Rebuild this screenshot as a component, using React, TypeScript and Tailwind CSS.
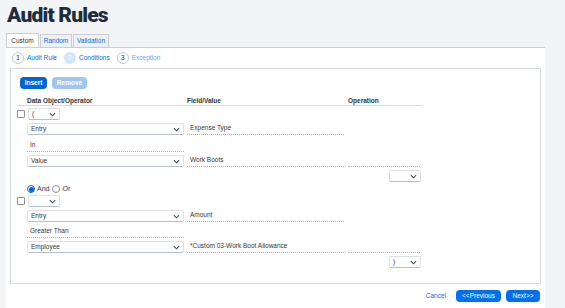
import React from 'react';

const Chevron: React.FC = () => (
  <svg width="7" height="5" viewBox="0 0 8 5" className="shrink-0">
    <path d="M1 1l3 3 3-3" fill="none" stroke="#354a5f" strokeWidth="1.2" />
  </svg>
);

const Select: React.FC<{ value?: string; w: string }> = ({ value = '', w }) => (
  <div className={`${w} h-[12px] flex items-center justify-between bg-white border border-[#dcdfe3] border-b-[#b8bec5] rounded-[2px] pl-[3px] pr-[3px]`}>
    <span className="text-[6.5px] text-[#32363a] leading-none">{value}</span>
    <Chevron />
  </div>
);

const Field: React.FC<{ text?: string; w: string }> = ({ text = '', w }) => (
  <div className={`${w} h-[12px] flex items-center border-b border-dotted border-[#a9b0b7] pl-[3px]`}>
    <span className="text-[6.5px] text-[#32363a] leading-none">{text}</span>
  </div>
);

const Step: React.FC<{ n: string; label: string; active?: boolean; color: string }> = ({ n, label, active, color }) => (
  <div className="flex items-center gap-[3px]">
    <div className={`w-[12px] h-[12px] rounded-full flex items-center justify-center text-[7px] ${active ? 'bg-[#d1e6fb] text-white' : 'border border-[#c3c8cd] text-[#32363a]'}`}>{n}</div>
    <span className={`text-[6.5px] ${color}`}>{label}</span>
  </div>
);

const App: React.FC = (): JSX.Element => {
  return (
    <div className="w-[565px] h-[308px] bg-[#f3f4f6] overflow-hidden flex flex-col" style={{ fontFamily: '"Liberation Sans", Arial, sans-serif' }}>
      <h1 className="pl-[7px] pt-[1px] h-[33px] text-[21px] font-black text-[#1d2d3e] tracking-[-0.8px] leading-[28px]" style={{ fontFamily: 'Roboto, "Liberation Sans", sans-serif' }}>Audit Rules</h1>

      <div className="ml-[6px] flex items-end gap-[1px] h-[14px]">
        <div className="h-[14px] w-[33px] bg-white border border-b-0 border-[#c9ced3] flex items-center justify-center text-[6.5px] text-[#32363a]">Custom</div>
        <div className="h-[13px] w-[32px] bg-[#eef0f3] border border-b-0 border-[#c9ced3] flex items-center justify-center text-[6.5px] text-[#0a6ed1]">Random</div>
        <div className="h-[13px] w-[36px] bg-[#eef0f3] border border-b-0 border-[#c9ced3] flex items-center justify-center text-[6.5px] text-[#0a6ed1]">Validation</div>
      </div>

      <div className="ml-[6px] w-[539px] flex-1 bg-white border-t border-[#c9ced3] flex flex-col">
        <div className="h-[20px] pl-[6px] flex items-center gap-[7px]">
          <Step n="1" label="Audit Rule" color="text-[#0a6ed1]" />
          <Step n="2" label="Conditions" active color="text-[#0a6ed1]" />
          <Step n="3" label="Exception" color="text-[#6ea6e6]" />
        </div>

        <div className="mx-[4px] h-[216px] border border-[#d5dadd] flex flex-col">
          <div className="pl-[9px] pt-[8px] flex gap-[5px]">
            <button className="h-[12px] w-[27px] rounded-[4px] bg-[#0064d9] text-white text-[6.5px] font-bold">Insert</button>
            <button className="h-[12px] w-[35px] rounded-[4px] bg-[#9ec6f3] text-white text-[6.5px] font-bold">Remove</button>
          </div>

          <div className="ml-[6px] mt-[7px] w-[406px] h-[10px] flex items-center border-b border-[#d5dadd] text-[6.5px] font-bold text-[#32363a]">
            <span className="ml-[10px] w-[160px]">Data Object/Operator</span>
            <span className="w-[161px]">Field/Value</span>
            <span>Operation</span>
          </div>

          <div className="ml-[6px] flex flex-col">
            <div className="mt-[2px] flex items-center gap-[3px]">
              <div className="w-[8px] h-[8px] border border-[#89919a] rounded-[1px] bg-white" />
              <Select value="(" w="w-[32px]" />
            </div>
            <div className="mt-[3px] ml-[10px] flex items-center gap-[3px]">
              <Select value="Entry" w="w-[157px]" />
              <Field text="Expense Type" w="w-[157px]" />
            </div>
            <div className="mt-[5px] ml-[10px] flex">
              <Field text="In" w="w-[157px]" />
            </div>
            <div className="mt-[3px] ml-[10px] flex items-center gap-[3px]">
              <Select value="Value" w="w-[157px]" />
              <Field text="Work Boots" w="w-[157px]" />
              <div className="ml-[1px]"><Field w="w-[72px]" /></div>
            </div>
            <div className="mt-[3px] ml-[372px]">
              <Select w="w-[32px]" />
            </div>
            <div className="mt-[2px] ml-[10px] h-[10px] flex items-center gap-[2px] text-[7px] text-[#32363a]">
              <span className="w-[8px] h-[8px] rounded-full border border-[#0064d9] flex items-center justify-center"><span className="w-[5px] h-[5px] rounded-full bg-[#0064d9]" /></span>
              <span>And</span>
              <span className="ml-[1px] w-[8px] h-[8px] rounded-full border border-[#89919a]" />
              <span>Or</span>
            </div>
            <div className="mt-[1px] flex items-center gap-[3px]">
              <div className="w-[8px] h-[8px] border border-[#89919a] rounded-[1px] bg-white" />
              <Select w="w-[32px]" />
            </div>
            <div className="mt-[3px] ml-[10px] flex items-center gap-[3px]">
              <Select value="Entry" w="w-[157px]" />
              <Field text="Amount" w="w-[157px]" />
            </div>
            <div className="mt-[4px] ml-[10px] flex">
              <Field text="Greater Than" w="w-[157px]" />
            </div>
            <div className="mt-[3px] ml-[10px] flex items-center gap-[3px]">
              <Select value="Employee" w="w-[157px]" />
              <Field text="*Custom 03-Work Boot Allowance" w="w-[157px]" />
              <div className="ml-[1px]"><Field w="w-[72px]" /></div>
            </div>
            <div className="mt-[3px] ml-[372px]">
              <Select value=")" w="w-[32px]" />
            </div>
          </div>
        </div>

        <div className="flex-1 flex items-center justify-end pr-[5px] gap-[5px]">
          <span className="mr-[5px] text-[6.5px] text-[#0a6ed1]">Cancel</span>
          <button className="h-[12px] w-[45px] rounded-[4px] bg-[#0070f2] text-white text-[6.5px]">&lt;&lt;Previous</button>
          <button className="h-[12px] w-[34px] rounded-[4px] bg-[#0070f2] text-white text-[6.5px]">Next&gt;&gt;</button>
        </div>
      </div>
    </div>
  );
};

export default App;
